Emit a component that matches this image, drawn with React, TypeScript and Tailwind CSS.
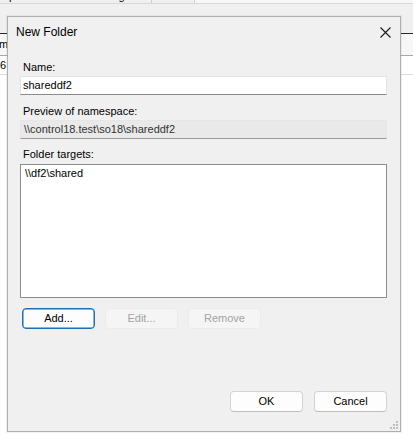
import React from "react";

const btn =
  "flex h-[21px] w-[73px] items-center justify-center rounded-[4px] border text-[11px] leading-none";

function CloseIcon() {
  return (
    <svg width="11" height="11" viewBox="0 0 11 11" className="block">
      <path d="M0.5 0.5 L10.5 10.5 M10.5 0.5 L0.5 10.5" stroke="#1a1a1a" strokeWidth="1.1" fill="none" />
    </svg>
  );
}

function SizeGrip() {
  const dots = [
    [6, 0],
    [3, 3],
    [6, 3],
    [0, 6],
    [3, 6],
    [6, 6],
  ];
  return (
    <svg width="8" height="8" viewBox="0 0 8 8" className="absolute bottom-[2px] right-[2px]">
      {dots.map(([x, y]) => (
        <rect key={`${x}-${y}`} x={x} y={y} width="2" height="2" fill="#bdbdbd" />
      ))}
    </svg>
  );
}

export default function App() {
  return (
    <div className="relative h-[443px] w-[413px] overflow-hidden bg-white font-['Liberation_Sans',Arial,sans-serif] text-black">
      {/* Window behind the dialog: tab strip, only the descenders peek out */}
      <div className="flex h-[4px] overflow-hidden border-b border-[#d8d8d8] bg-[#f0f0f0] text-[11px] leading-none">
        <div className="flex w-[152px] overflow-hidden border-r border-[#cfcfcf]">
          <span className="-ml-[8px] -mt-[9px] block w-[104px] shrink-0 whitespace-nowrap">Properties</span>
          <span className="-mt-[9px] block shrink-0 whitespace-nowrap">Delegation</span>
        </div>
        <div className="w-[43px] border-r border-[#cfcfcf]" />
        <div className="flex-1 bg-[#f7f7f7]" />
      </div>
      <div className="h-[29px] bg-[#f0f0f0]" />
      <div className="flex h-[23px] items-center overflow-hidden border-y border-t-[#2a2a2a] border-b-[#a8a8a8] bg-[#f7f7f7] text-[11px]">
        <span className="-ml-[15px] whitespace-nowrap">Name</span>
      </div>
      <div className="flex h-[19px] items-center border-b border-[#dcdcdc] text-[11px]">
        <span>6</span>
      </div>

      {/* Dialog */}
      <div className="absolute left-[7px] top-[16px] flex h-[416px] w-[394px] flex-col border border-[#aeaeae] bg-[#f0f0f0] shadow-[0_0_0_1px_rgba(0,0,0,0.05)]">
        <div className="flex h-[30px] shrink-0 items-center justify-between pl-[8px] pr-[9px]">
          <span className="text-[12px]">New Folder</span>
          <CloseIcon />
        </div>

        <div className="flex flex-col pl-[12px] pr-[13px] text-[11px] leading-[13px]">
          <label className="mt-[14px] pl-[3px]">Name:</label>
          <div className="mt-[2px] flex h-[19px] items-center border border-[#e3e3e3] border-b-[#8a8a8a] bg-white px-[2px]">
            shareddf2
          </div>

          <label className="mt-[10px] pl-[3px]">Preview of namespace:</label>
          <div className="mt-[2px] flex h-[19px] items-center border border-[#e6e6e6] border-b-[#9a9a9a] bg-[#e9e9e9] px-[3px] text-[#333333]">
            \\control18.test\so18\shareddf2
          </div>

          <label className="mt-[9px] pl-[3px]">Folder targets:</label>
          <div className="mt-[3px] h-[134px] border border-[#8c8c8c] bg-white px-[4px] pt-[2px]">
            \\df2\shared
          </div>

          <div className="mt-[10px] flex gap-[10px] pl-[2px]">
            <button className={`${btn} border-[#1f6fb6] bg-[#fdfdfd] shadow-[inset_0_0_0_0.5px_#1f6fb6]`}>Add...</button>
            <button className={`${btn} border-[#ebebeb] bg-[#f5f5f5] text-[#a3a3a3]`}>Edit...</button>
            <button className={`${btn} border-[#ebebeb] bg-[#f5f5f5] text-[#a3a3a3]`}>Remove</button>
          </div>

          <div className="mt-[62px] flex justify-end gap-[11px]">
            <button className={`${btn} h-[20px] w-[72px] border-[#d3d3d3] border-b-[#bdbdbd] bg-[#fdfdfd]`}>OK</button>
            <button className={`${btn} h-[20px] w-[72px] border-[#d3d3d3] border-b-[#bdbdbd] bg-[#fdfdfd]`}>Cancel</button>
          </div>
        </div>
        <SizeGrip />
      </div>
    </div>
  );
}
